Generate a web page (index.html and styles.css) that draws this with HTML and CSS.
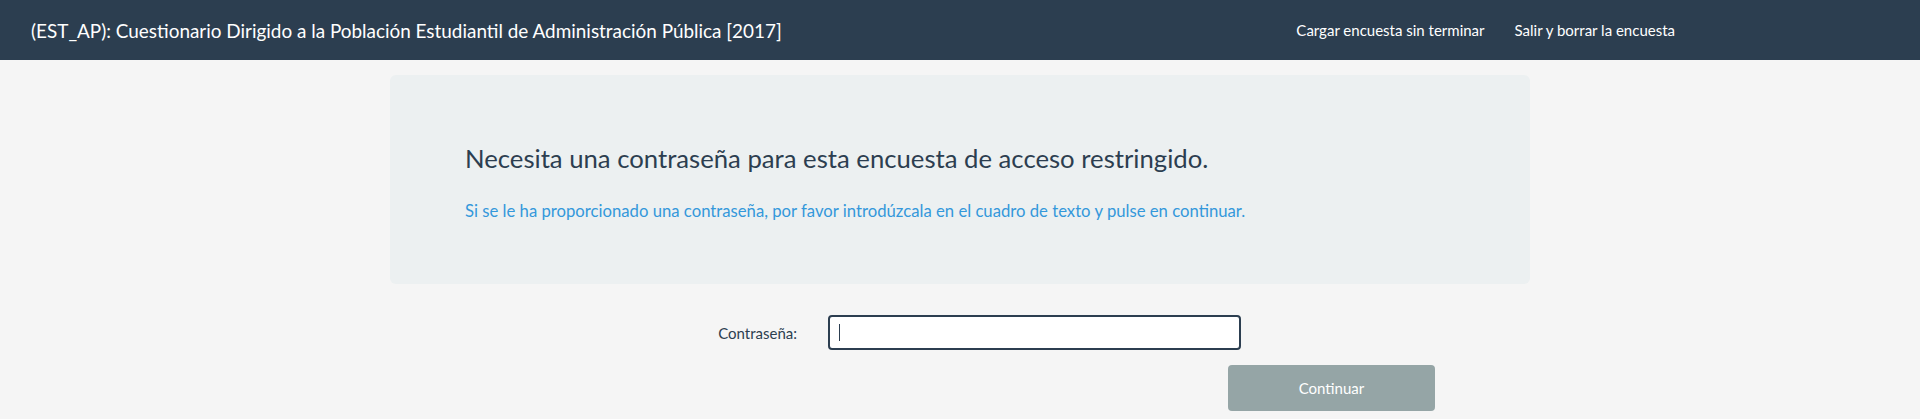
FILE: index.html
```html
<!DOCTYPE html>
<html lang="es">

<head>
    <meta charset="UTF-8">
    <meta name="viewport" content="width=device-width, initial-scale=1.0">
    <title>Encuesta de acceso restringido</title>
    <link rel="stylesheet" href="styles.css">
</head>

<body>
    <header class="topbar">
        <div class="brand">(EST_AP): Cuestionario Dirigido a la Población Estudiantil de Administración Pública [2017]</div>
        <nav class="top-links">
            <a href="#">Cargar encuesta sin terminar</a>
            <a href="#">Salir y borrar la encuesta</a>
        </nav>
    </header>

    <main class="container">
        <section class="jumbo">
            <h3 class="jumbo-title">Necesita una contraseña para esta encuesta de acceso restringido.</h3>
            <p class="jumbo-text">Si se le ha proporcionado una contraseña, por favor introdúzcala en el cuadro de texto y pulse en continuar.</p>
        </section>

        <form class="token-form">
            <div class="form-row">
                <label for="token" class="form-label">Contraseña:</label>
                <div class="field"><span class="caret"></span></div>
            </div>
            <div class="form-actions">
                <button type="submit" class="btn-continue">Continuar</button>
            </div>
        </form>
    </main>
</body>

</html>
```

FILE: styles.css
```css
body {
    font-family: Lato, "Open Sans", sans-serif;
    background-color: #f5f5f5;
    color: #2c3e50;
    margin: 0;
    padding: 0;
}

.topbar {
    background-color: #2c3e50;
    height: 60px;
    display: flex;
    align-items: center;
    color: #fff;
}

.brand {
    font-size: 18.92px;
    padding-left: 31px;
    white-space: nowrap;
}

.top-links {
    display: flex;
    margin-left: auto;
    margin-right: 230px;
}

.top-links a {
    color: #fff;
    text-decoration: none;
    font-size: 15px;
    padding: 0 15px;
}

.container {
    width: 1140px;
    margin: 0 auto;
    padding-top: 15px;
}

.jumbo {
    background-color: #ecf0f1;
    border-radius: 6px;
    height: 209px;
    box-sizing: border-box;
    padding: 69px 75px 0;
}

.jumbo-title {
    font-size: 25.7px;
    font-weight: normal;
    line-height: 1.1;
    margin: 0;
}

.jumbo-text {
    color: #3498db;
    font-size: 16.7px;
    line-height: 1.4;
    margin: 28px 0 0;
}

.token-form {
    padding-top: 31px;
}

.form-row {
    display: flex;
    align-items: center;
}

.form-label {
    width: 407px;
    text-align: right;
    font-size: 15px;
    color: #2c3e50;
}

.field {
    margin-left: 31px;
    width: 413px;
    height: 35px;
    box-sizing: border-box;
    border: 2px solid #2c3e50;
    border-radius: 4px;
    background: #fff;
    display: flex;
    align-items: center;
    padding-left: 9px;
}

.caret {
    width: 1px;
    height: 17px;
    background: #2c3e50;
}

.form-actions {
    padding: 15px 0 0 838px;
}

.btn-continue {
    width: 207px;
    height: 46px;
    background-color: #95a5a6;
    color: #fff;
    border: none;
    border-radius: 4px;
    font-family: Lato, sans-serif;
    font-size: 15px;
    cursor: pointer;
}
```
